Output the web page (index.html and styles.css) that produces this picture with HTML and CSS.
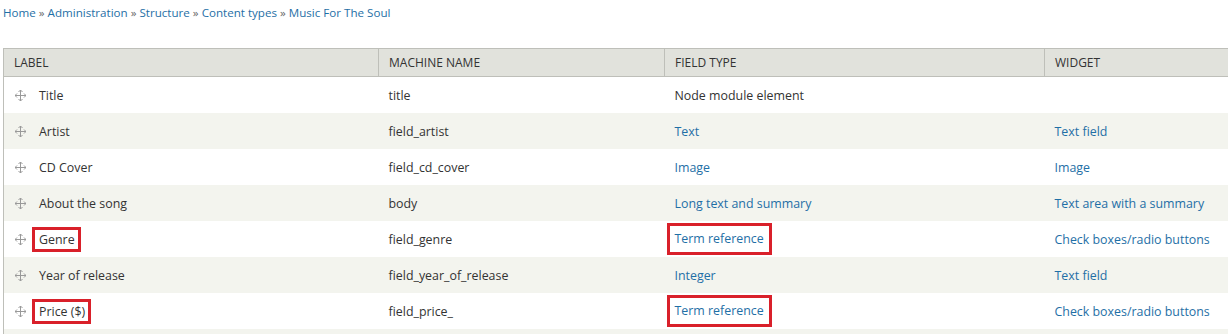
FILE: index.html
```html
<!DOCTYPE html>
<html lang="en">
<head>
    <meta charset="UTF-8">
    <title>Manage fields - Music For The Soul</title>
    <link rel="stylesheet" href="styles.css">
</head>
<body>
    <div class="breadcrumb">
        <a href="#">Home</a> » <a href="#">Administration</a> » <a href="#">Structure</a> » <a href="#">Content types</a> » <a href="#">Music For The Soul</a>
    </div>

    <table class="fields">
        <thead>
            <tr>
                <th class="col-label">Label</th>
                <th class="col-machine">Machine name</th>
                <th class="col-type">Field type</th>
                <th class="col-widget">Widget</th>
            </tr>
        </thead>
        <tbody>
            <tr>
                <td><span class="drag"><svg viewBox="0 0 11 11"><path d="M5.5 0v11M0 5.5h11M3.5 2L5.5 0L7.5 2M3.5 9L5.5 11L7.5 9M2 3.5L0 5.5L2 7.5M9 3.5L11 5.5L9 7.5"/></svg></span>Title</td>
                <td>title</td>
                <td>Node module element</td>
                <td></td>
            </tr>
            <tr class="even">
                <td><span class="drag"><svg viewBox="0 0 11 11"><path d="M5.5 0v11M0 5.5h11M3.5 2L5.5 0L7.5 2M3.5 9L5.5 11L7.5 9M2 3.5L0 5.5L2 7.5M9 3.5L11 5.5L9 7.5"/></svg></span>Artist</td>
                <td>field_artist</td>
                <td><a href="#">Text</a></td>
                <td><a href="#">Text field</a></td>
            </tr>
            <tr>
                <td><span class="drag"><svg viewBox="0 0 11 11"><path d="M5.5 0v11M0 5.5h11M3.5 2L5.5 0L7.5 2M3.5 9L5.5 11L7.5 9M2 3.5L0 5.5L2 7.5M9 3.5L11 5.5L9 7.5"/></svg></span>CD Cover</td>
                <td>field_cd_cover</td>
                <td><a href="#">Image</a></td>
                <td><a href="#">Image</a></td>
            </tr>
            <tr class="even">
                <td><span class="drag"><svg viewBox="0 0 11 11"><path d="M5.5 0v11M0 5.5h11M3.5 2L5.5 0L7.5 2M3.5 9L5.5 11L7.5 9M2 3.5L0 5.5L2 7.5M9 3.5L11 5.5L9 7.5"/></svg></span>About the song</td>
                <td>body</td>
                <td><a href="#">Long text and summary</a></td>
                <td><a href="#">Text area with a summary</a></td>
            </tr>
            <tr>
                <td><span class="drag"><svg viewBox="0 0 11 11"><path d="M5.5 0v11M0 5.5h11M3.5 2L5.5 0L7.5 2M3.5 9L5.5 11L7.5 9M2 3.5L0 5.5L2 7.5M9 3.5L11 5.5L9 7.5"/></svg></span><span class="mark">Genre</span></td>
                <td>field_genre</td>
                <td><a href="#" class="mark mark-link">Term reference</a></td>
                <td><a href="#">Check boxes/radio buttons</a></td>
            </tr>
            <tr class="even">
                <td><span class="drag"><svg viewBox="0 0 11 11"><path d="M5.5 0v11M0 5.5h11M3.5 2L5.5 0L7.5 2M3.5 9L5.5 11L7.5 9M2 3.5L0 5.5L2 7.5M9 3.5L11 5.5L9 7.5"/></svg></span>Year of release</td>
                <td>field_year_of_release</td>
                <td><a href="#">Integer</a></td>
                <td><a href="#">Text field</a></td>
            </tr>
            <tr>
                <td><span class="drag"><svg viewBox="0 0 11 11"><path d="M5.5 0v11M0 5.5h11M3.5 2L5.5 0L7.5 2M3.5 9L5.5 11L7.5 9M2 3.5L0 5.5L2 7.5M9 3.5L11 5.5L9 7.5"/></svg></span><span class="mark">Price ($)</span></td>
                <td>field_price_</td>
                <td><a href="#" class="mark mark-link">Term reference</a></td>
                <td><a href="#">Check boxes/radio buttons</a></td>
            </tr>
            <tr class="even">
                <td></td>
                <td></td>
                <td></td>
                <td></td>
            </tr>
        </tbody>
    </table>
</body>
</html>
```

FILE: styles.css
```css
body {
    font-family: "Open Sans", Arial, sans-serif;
    font-size: 12px;
    color: #333;
    background-color: #fff;
    margin: 0;
    width: 1228px;
    height: 334px;
    overflow: hidden;
}
a {
    color: #1f6fa6;
    text-decoration: none;
}
.breadcrumb {
    padding: 5px 0 0 3px;
    height: 48px;
    box-sizing: border-box;
    font-size: 11.6px;
    color: #666;
}
.fields {
    border-collapse: collapse;
    margin-left: 3px;
    width: 1245px;
    table-layout: fixed;
    border-left: 1px solid #bebfb9;
}
.fields th {
    background-color: #e1e2dc;
    border-top: 1px solid #bebfb9;
    border-bottom: 1px solid #bebfb9;
    border-right: 1px solid #bebfb9;
    text-align: left;
    text-transform: uppercase;
    font-weight: normal;
    font-size: 12px;
    height: 27px;
    padding: 0 10px;
    color: #333;
}
.col-label { width: 354px; }
.col-machine { width: 265px; }
.col-type { width: 359px; }
.fields td {
    height: 36px;
    padding: 0 10px;
    font-size: 12.4px;
    white-space: nowrap;
}
.fields tr.even td {
    background-color: #f3f4ee;
}
.drag {
    display: inline-block;
    width: 11px;
    height: 11px;
    margin: 0 13px 0 1px;
    vertical-align: -1px;
}
.drag svg {
    display: block;
    width: 11px;
    height: 11px;
    fill: none;
    stroke: #999;
    stroke-width: 1;
}
.mark {
    display: inline-block;
    border: 3px solid #d9202a;
    padding: 0 3px 0 4px;
    margin-left: -7px;
    line-height: 19px;
}
.mark-link {
    padding: 3px 5px 4px 5px;
    margin-left: -8px;
}
```
